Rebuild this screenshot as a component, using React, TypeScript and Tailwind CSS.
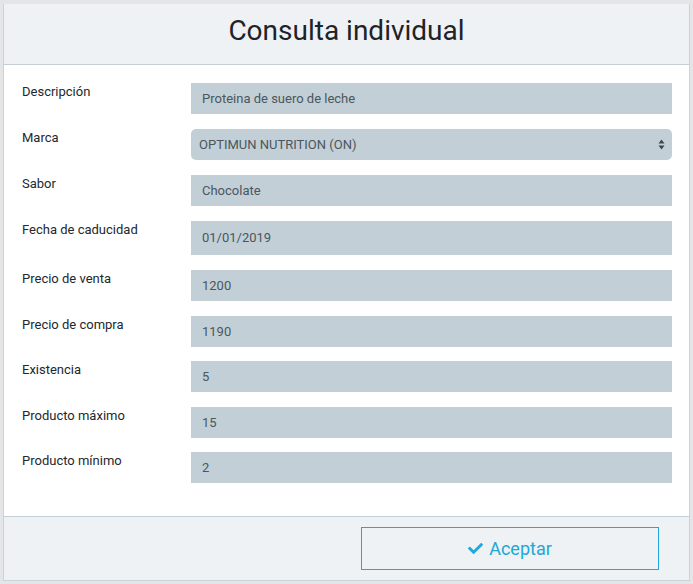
import { FaCheck } from "react-icons/fa"

type Field = { label: string; value: string; kind?: "select" | "date"; tight?: boolean }

const FIELDS: Field[] = [
  { label: "Descripción", value: "Proteina de suero de leche" },
  { label: "Marca", value: "OPTIMUN NUTRITION (ON)", kind: "select" },
  { label: "Sabor", value: "Chocolate" },
  { label: "Fecha de caducidad", value: "01/01/2019", kind: "date" },
  { label: "Precio de venta", value: "1200" },
  { label: "Precio de compra", value: "1190" },
  { label: "Existencia", value: "5", tight: true },
  { label: "Producto máximo", value: "15" },
  { label: "Producto mínimo", value: "2", tight: true },
]

function SelectArrows() {
  return (
    <svg width="7" height="11" viewBox="0 0 7 11" className="text-[#3d474e]">
      <path d="M3.5 0.5 L6.5 4.5 L0.5 4.5 Z" fill="currentColor" />
      <path d="M3.5 10.5 L6.5 6.5 L0.5 6.5 Z" fill="currentColor" />
    </svg>
  )
}

function Row({ field }: { field: Field }) {
  const box = (() => {
    if (field.kind === "select") {
      return (
        <div className="flex-1 h-[31px] bg-[#c2cfd6] rounded-[5px] pl-[8px] pr-[7px] flex items-center justify-between text-[13px] text-[#4b565d]">
          <span>{field.value}</span>
          <SelectArrows />
        </div>
      )
    }
    return (
      <div
        className={`flex-1 bg-[#c2cfd6] pl-[11px] flex items-center text-[13px] text-[#4b565d] ${
          field.kind === "date" ? "h-[34px]" : "h-[31px]"
        }`}
      >
        {field.value}
      </div>
    )
  })()

  return (
    <div className={`flex items-start ${field.tight ? "-mt-[1px]" : ""}`}>
      <div className="w-[169px] shrink-0 text-[13px] leading-[16px] text-[#23282c] pt-[1px]">{field.label}</div>
      {box}
    </div>
  )
}

export default function App() {
  return (
    <div className="w-[693px] h-[584px] bg-[#e4e5e6] pt-[4px] px-[3px] font-['Roboto',sans-serif]">
      <div className="border border-t-0 border-[#c8d3da] bg-white">
        <div className="h-[61px] bg-[#eef2f5] border-b border-[#c2cfd6] flex justify-center pt-[10px]">
          <h1 className="text-[28px] leading-[34px] text-[#1f2327]">Consulta individual</h1>
        </div>
        <div className="pl-[18px] pr-[17px] pt-[18px] pb-[33px] flex flex-col gap-[15px]">
          {FIELDS.map((f) => (
            <Row key={f.label} field={f} />
          ))}
        </div>
        <div className="h-[64px] bg-[#eef2f5] border-t border-[#c2cfd6] flex justify-end pt-[10px] pr-[30px]">
          <button className="w-[298px] h-[43px] border border-[#20a8d8] text-[#20a8d8] text-[18px] flex items-center justify-center gap-[6px]">
            <FaCheck className="w-[15px] h-[15px]" />
            Aceptar
          </button>
        </div>
      </div>
    </div>
  )
}
